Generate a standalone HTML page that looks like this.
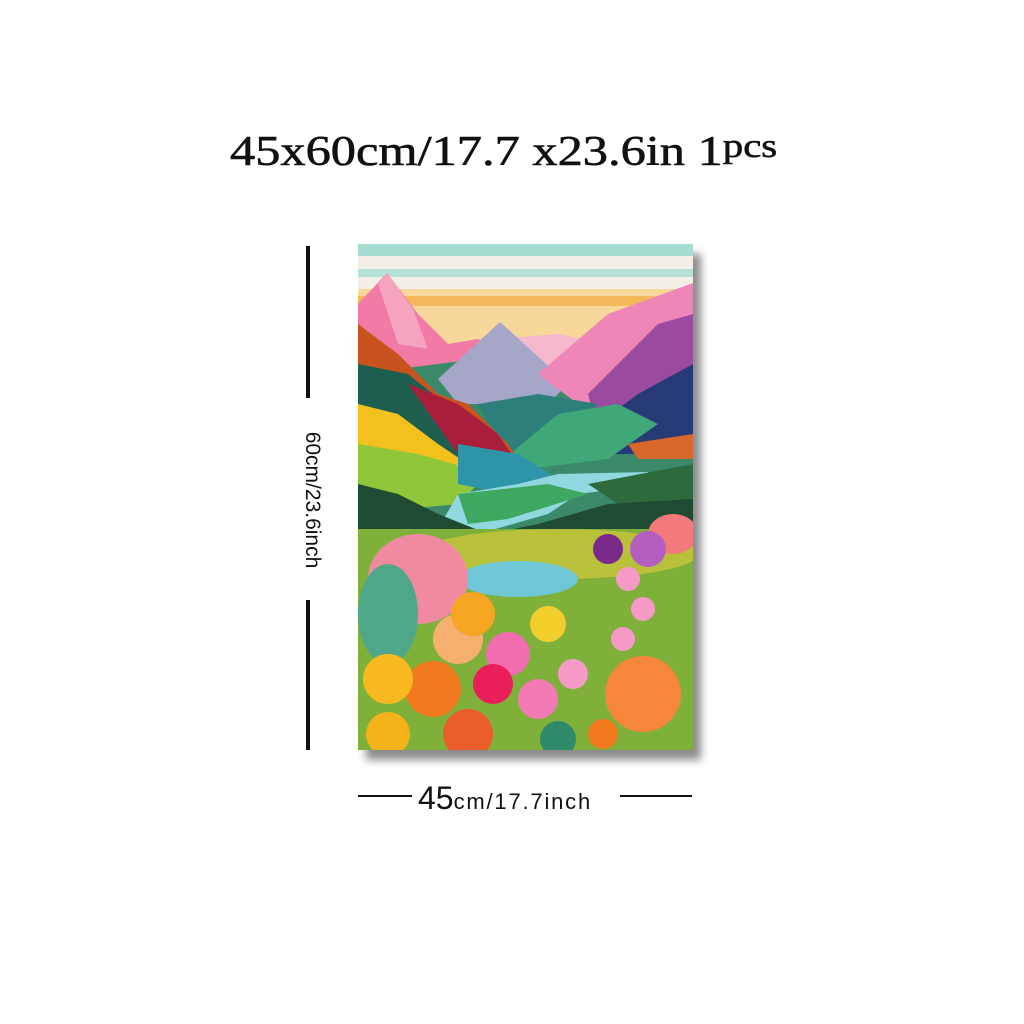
<!DOCTYPE html>
<html><head><style>
body{margin:0;width:1024px;height:1024px;background:#fff;position:relative;overflow:hidden;font-family:"Liberation Sans",sans-serif}
.t{position:absolute;left:230px;top:128px;font-family:"Liberation Serif",serif;font-size:42px;color:#111;white-space:nowrap;transform:scaleX(1.2);transform-origin:0 0;-webkit-text-stroke:0.6px #111}
.t sup{font-size:34px;vertical-align:8px}
.vl{position:absolute;left:306px;width:4px;background:#111}
.hl{position:absolute;top:795px;height:2px;background:#111}
.vt{position:absolute;left:312px;top:500px;transform:translate(-50%,-50%) rotate(90deg);font-size:21px;color:#111;white-space:nowrap}
.bt{position:absolute;left:418px;top:780px;font-size:22px;color:#111;white-space:nowrap;letter-spacing:1.8px}
.bt b{font-weight:normal;font-size:32px;letter-spacing:0}
.pic{position:absolute;left:358px;top:244px;width:335px;height:506px;box-shadow:8px 10px 8px rgba(0,0,0,.45)}
</style></head><body>
<div class="t">45x60cm/17.7 x23.6in 1<sup>pcs</sup></div>
<div class="vl" style="top:246px;height:152px"></div>
<div class="vl" style="top:600px;height:150px"></div>
<div class="vt">60cm/23.6inch</div>
<div class="hl" style="left:358px;width:54px"></div>
<div class="hl" style="left:620px;width:72px"></div>
<div class="bt"><b>45</b>cm/17.7inch</div>
<svg class="pic" viewBox="0 0 335 506" preserveAspectRatio="none">
<rect width="335" height="506" fill="#f3efe6"/>
<rect y="0" width="335" height="12" fill="#a6ddd0"/>
<rect y="25" width="335" height="8" fill="#b5e0d6"/>
<rect y="45" width="335" height="60" fill="#f7d89a"/>
<rect y="52" width="300" height="10" fill="#f4b85a"/>
<rect y="100" width="335" height="190" fill="#3a8a6a"/>
<polygon points="0,60 29,29 60,70 90,100 120,95 160,110 0,130" fill="#f27aa6"/>
<polygon points="20,40 29,29 55,65 70,105 40,100" fill="#f6a3bf"/>
<polygon points="140,95 200,90 250,100 230,150 180,140" fill="#f5b8cc"/>
<polygon points="80,135 142,78 210,140 190,160 100,160" fill="#a5a6c8"/>
<polygon points="180,130 250,70 335,39 335,150 220,160" fill="#ef86b8"/>
<polygon points="230,150 300,80 335,70 335,180 240,190" fill="#9b4aa0"/>
<polygon points="120,160 180,150 240,160 200,200 150,210" fill="#2c7f7a"/>
<polygon points="200,210 280,150 335,120 335,210" fill="#263a75"/>
<polygon points="140,220 200,170 260,160 300,180 250,215 170,225" fill="#3fa778"/>
<polygon points="270,200 335,190 335,215 280,215" fill="#d8682a"/>
<polygon points="0,80 40,110 80,150 110,160 150,200 170,230 0,200" fill="#c8531e"/>
<polygon points="0,120 50,130 100,170 140,200 120,230 0,220" fill="#1d5e4e"/>
<polygon points="50,140 100,160 140,190 160,220 100,210" fill="#a91e3a"/>
<polygon points="0,160 40,170 80,200 110,220 60,240 0,230" fill="#f2c11d"/>
<polygon points="0,200 60,210 130,230 100,260 0,270" fill="#90c63a"/>
<polygon points="100,200 160,210 200,235 150,250 100,240" fill="#2e95a8"/>
<polygon points="100,250 160,240 200,230 290,228 300,240 220,250 190,270 120,290 80,285" fill="#8fd8e0"/>
<polygon points="100,250 190,240 230,250 150,275 110,280" fill="#3ea760"/>
<polygon points="230,240 335,220 335,260 260,260" fill="#2d6b3c"/>
<polygon points="0,240 40,250 80,270 130,290 180,280 250,260 335,255 335,300 0,300" fill="#1f4b33"/>
<rect y="285" width="335" height="221" fill="#7fb13a"/>
<ellipse cx="200" cy="310" rx="140" ry="25" fill="#b9c13a"/>
<ellipse cx="160" cy="335" rx="60" ry="18" fill="#6fc7d6"/>
<ellipse cx="60" cy="335" rx="50" ry="45" fill="#f08aa0"/>
<ellipse cx="30" cy="370" rx="30" ry="50" fill="#4fa88a"/>
<ellipse cx="315" cy="290" rx="25" ry="20" fill="#f27a7a"/>
<circle cx="250" cy="305" r="15" fill="#7a2a8a"/>
<circle cx="290" cy="305" r="18" fill="#b45fc0"/>
<circle cx="270" cy="335" r="12" fill="#f59ac7"/>
<circle cx="285" cy="365" r="12" fill="#f59ac7"/>
<circle cx="265" cy="395" r="12" fill="#f59ac7"/>
<circle cx="100" cy="395" r="25" fill="#f5b070"/>
<circle cx="115" cy="370" r="22" fill="#f4a521"/>
<circle cx="190" cy="380" r="18" fill="#f2cf2c"/>
<circle cx="150" cy="410" r="22" fill="#f06db0"/>
<circle cx="135" cy="440" r="20" fill="#e91e5a"/>
<circle cx="75" cy="445" r="28" fill="#f07a1d"/>
<circle cx="30" cy="435" r="25" fill="#f7b91f"/>
<circle cx="180" cy="455" r="20" fill="#f37ab5"/>
<circle cx="215" cy="430" r="15" fill="#f59ac7"/>
<circle cx="285" cy="450" r="38" fill="#f6873a"/>
<circle cx="30" cy="490" r="22" fill="#f4b21b"/>
<circle cx="110" cy="490" r="25" fill="#ec5d2c"/>
<circle cx="245" cy="490" r="15" fill="#f07a1d"/>
<circle cx="200" cy="495" r="18" fill="#2f8a6a"/>
</svg>
</body></html>
